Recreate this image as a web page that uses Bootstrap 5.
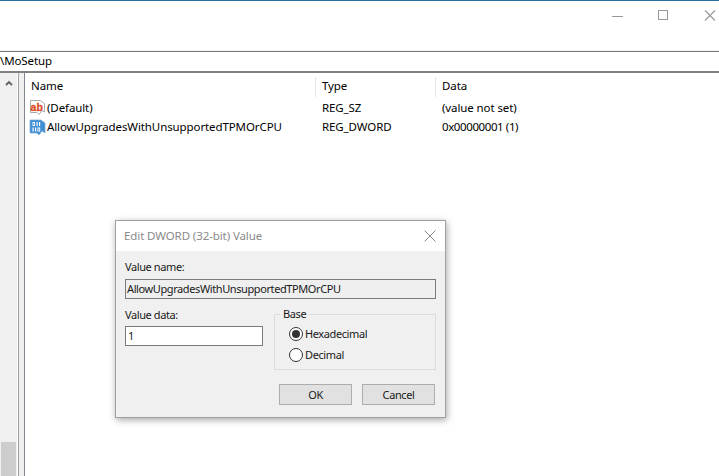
<!doctype html>
<html lang="en"><head><meta charset="utf-8"><title>Registry Editor</title>
<link href="https://cdn.jsdelivr.net/npm/bootstrap@5.3.0/dist/css/bootstrap.min.css" rel="stylesheet">
<style>
html,body{height:476px;overflow:hidden}
body{background:#fff;color:#000;font:11.5px/16px "Noto Sans","Open Sans",sans-serif;letter-spacing:-.1px;position:relative}
.titlebar{height:50px;border-top:1px solid #2b6c9e;padding:7px 3px 0 0}
.winctl{width:30px;height:16px;color:#999}
.addr{height:23px;border-top:1px solid #f0f0f0;box-shadow:inset 0 1px 0 #7a7a7a;border-bottom:2px solid #808080;padding:1px 0 0 0;background:#fff;line-height:18px}
.main{height:403px}
.sbar{width:18px;background:#f0f0f0;padding:6px 1px 0;border-right:1px solid #fff}
.thumb{height:34px;background:#cdcdcd}
.split{width:7px;background:#f0f0f0;border-left:1px solid #a0a0a0;border-right:1px solid #828790}
.hdrow{height:24px;padding-top:4px}
.colname{width:291px;padding-left:6px;border-right:1px solid #e5e5e5;line-height:17px}
.coltype{width:120px;padding-left:6px;border-right:1px solid #e5e5e5;line-height:17px}
.coldata{padding-left:6px;line-height:17px}
.vrow{height:20px;line-height:20px;white-space:nowrap}
.rowfirst{padding-top:1px}
.cellname{width:291px;padding-left:4px;gap:1px}
.celltype{width:120px;padding-left:6px}
.celldata{padding-left:6px}
.numtxt{letter-spacing:-.4px}
.ico{width:17px;height:17px;flex:none}
.dlg{position:absolute;left:115px;top:220px;width:331px;height:198px;background:#f0f0f0;border:1px solid #a0a0a0;box-shadow:1px 2px 7px rgba(0,0,0,.35)}
.dlghead{height:30px;background:#fff;color:#8a8a8a;padding:0 9px 0 8px}
.dlgbody{padding:8px 9px 0 9px;color:#1a1a1a;font-size:11px;letter-spacing:-.4px}
.lab{height:16px;line-height:16px}
.fakeinp{height:20px;border:1px solid #7a7a7a;line-height:18px;padding:0 1px;white-space:nowrap;overflow:hidden}
.ro{background:#efefef;margin:4px 0 7px}
.wr{background:#fff;width:138px;margin-top:3px;padding-left:2px}
.leftcol{width:138px;padding-top:1px}
.grp{width:162px;height:63px;margin:1px 0 0 11px;border:1px solid #dcdcdc;padding:0 0 0 14px}
.grp legend{float:none;width:auto;font-size:11px;line-height:14px;margin:0 0 2px -9px;padding:0 3px}
.rad{height:21px;gap:2px;line-height:21px}
.circ{width:14px;height:14px;border:1px solid #333;border-radius:50%;background:#fff;display:flex;align-items:center;justify-content:center;flex:none}
.dot{width:8px;height:8px;border-radius:50%;background:#333}
.wbtn{width:73px;height:21px;background:#e1e1e1;border:1px solid #adadad;text-align:center;line-height:19px;color:#1a1a1a}
.btnrow{gap:10px;margin-top:14px;padding-right:1px}
</style></head><body>
<div class="titlebar d-flex justify-content-end align-items-start">
<svg class="winctl" style="margin-right:20px" viewBox="0 0 30 16"><path d="M4 8.500H15" stroke="#999" fill="none"/></svg>
<svg class="winctl" style="margin-right:16px" viewBox="0 0 30 16"><rect x="0.500" y="2.500" width="9" height="9" stroke="#999" fill="none"/></svg>
<svg class="winctl" style="width:12px" viewBox="0 0 12 16"><path d="M1 2.500L11 12.500M11 2.500L1 12.500" stroke="#999" stroke-width="1.100" fill="none"/></svg>
</div>
<div class="addr">\MoSetup</div>
<div class="main d-flex">
<div class="sbar d-flex flex-column justify-content-between">
<svg width="16" height="10" viewBox="0 0 16 10"><path d="M5 6L8 3L11 6" stroke="#606060" stroke-width="1.800" fill="none"/></svg>
<div class="thumb"></div>
</div>
<div class="split"></div>
<div class="flex-grow-1">
<div class="hdrow d-flex"><div class="colname">Name</div><div class="coltype">Type</div><div class="coldata">Data</div></div>
<div class="vrow rowfirst d-flex"><div class="cellname d-flex align-items-center">
<svg class="ico" viewBox="0 0 17 17"><path d="M1.500 1.500H11.500L15.500 4.500V13L13 11.500L10 15.500L8 13.500H1.500Z" fill="#fff" stroke="#a9a9a9"/><text x="1.600" y="11.500" font-family="Liberation Sans" font-weight="700" font-size="10.500" letter-spacing="0" fill="#dc4a26" stroke="#dc4a26" stroke-width=".3">ab</text></svg>
<span>(Default)</span></div><div class="celltype">REG_SZ</div><div class="celldata">(value not set)</div></div>
<div class="vrow d-flex"><div class="cellname d-flex align-items-center">
<svg class="ico" viewBox="0 0 17 17"><path d="M1 1H12L16 4V14L13 12L10 16L8 14H1Z" fill="#3f8fd6" stroke="#7aaad0" stroke-width=".7"/><g fill="#fff"><path d="M3.500 3h2.500v4h-2.500zM4.300 3.900v2.200h.9V3.900z" fill-rule="evenodd"/><path d="M7.500 3h1.200v4h-1.200zM10 3h1.200v4H10zM3.500 8.500h1.200v4H3.500zM6 8.500h1.200v4H6z"/><path d="M8.500 8.500h2.700v4H8.500zM9.300 9.400v2.200h1V9.400z" fill-rule="evenodd"/></g></svg>
<span>AllowUpgradesWithUnsupportedTPMOrCPU</span></div><div class="celltype">REG_DWORD</div><div class="celldata numtxt">0x00000001 (1)</div></div>
</div>
</div>
<div class="dlg" role="dialog">
<div class="dlghead d-flex justify-content-between align-items-center"><span>Edit DWORD (32-bit) Value</span>
<svg width="12" height="12" viewBox="0 0 12 12"><path d="M.5 .5L11.500 11.500M11.500 .5L.5 11.500" stroke="#8a8a8a" fill="none"/></svg></div>
<div class="dlgbody">
<div class="lab">Value name:</div>
<div class="fakeinp ro">AllowUpgradesWithUnsupportedTPMOrCPU</div>
<div class="d-flex">
<div class="leftcol"><div class="lab">Value data:</div><div class="fakeinp wr">1</div></div>
<fieldset class="grp"><legend>Base</legend>
<div class="rad d-flex align-items-center"><span class="circ"><span class="dot"></span></span>Hexadecimal</div>
<div class="rad d-flex align-items-center"><span class="circ"></span>Decimal</div>
</fieldset>
</div>
<div class="btnrow d-flex justify-content-end"><div class="wbtn">OK</div><div class="wbtn">Cancel</div></div>
</div>
</div>
</body></html>
